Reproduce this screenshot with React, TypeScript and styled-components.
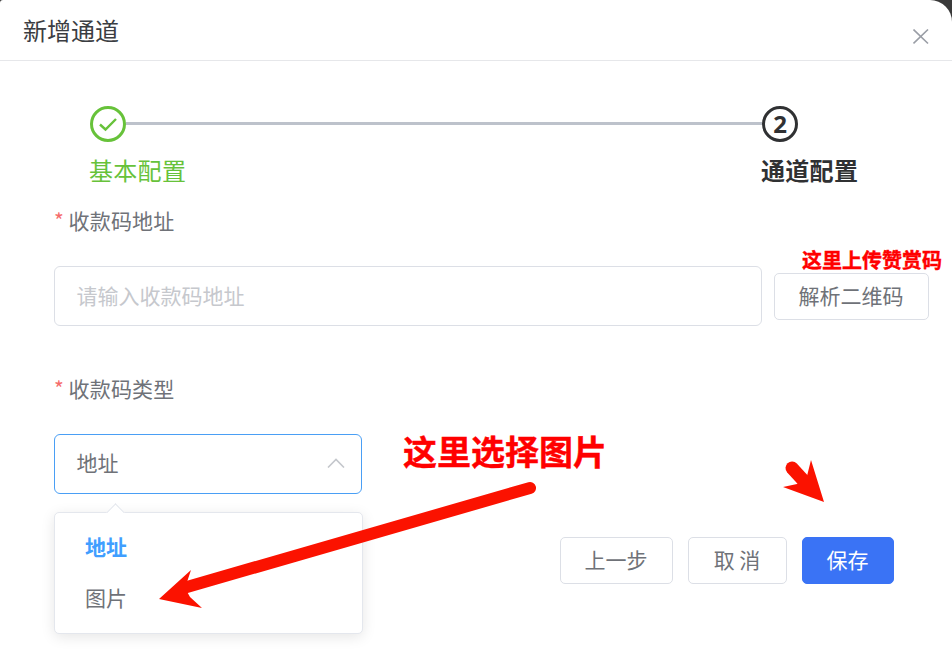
import React from "react";
import styled, { createGlobalStyle } from "styled-components";

const Global = createGlobalStyle`
  html, body { margin: 0; padding: 0; background: #fff; }
  body { font-family: "Noto Sans CJK SC", "Noto Sans", sans-serif; }
  * { box-sizing: border-box; }
`;

const Backdrop = styled.div`
  position: relative;
  width: 952px;
  height: 665px;
  overflow: hidden;
  background: #3a3a3a;
`;
const Dialog = styled.div`
  position: relative;
  width: 952px;
  height: 665px;
  background: #fff;
  border-radius: 3px 22px 0 0;
`;
const Header = styled.header`
  height: 61px;
  padding: 12px 0 0 23px;
  display: flex;
  justify-content: space-between;
  border-bottom: 1px solid #e6e7ea;
`;
const Title = styled.h2`
  margin: 0;
  font-size: 24px;
  line-height: 36px;
  font-weight: 400;
  color: #3b3d42;
`;
const Close = styled.button`
  width: 16px;
  height: 16px;
  margin: 17px 23px 0 0;
  padding: 0;
  border: 0;
  background: none;
  color: #9a9ea6;
  display: flex;
`;
const Steps = styled.div`
  display: flex;
  padding: 45px 0 0 90px;
  width: 858px;
`;
const Step = styled.div<{ $grow?: boolean }>`
  flex: ${(p) => (p.$grow ? "1" : "none")};
  display: flex;
  flex-direction: column;
  width: 96px;
`;
const StepTop = styled.div`
  display: flex;
  align-items: center;
  height: 36px;
`;
const Circle = styled.div<{ $color: string }>`
  width: 36px;
  height: 36px;
  flex: none;
  border-radius: 50%;
  border: 3px solid ${(p) => p.$color};
  color: ${(p) => p.$color};
  display: flex;
  align-items: center;
  justify-content: center;
  font: 700 24px/1 "Noto Sans", sans-serif;
`;
const Line = styled.div`
  flex: 1;
  height: 3px;
  margin-bottom: 1px;
  background: #bdc2cb;
`;
const StepLabel = styled.div<{ $color: string; $bold?: boolean }>`
  margin: 10px 0 0 -1px;
  font-size: 24px;
  line-height: 36px;
  letter-spacing: 0.3px;
  white-space: nowrap;
  color: ${(p) => p.$color};
  font-weight: ${(p) => (p.$bold ? 700 : 400)};
`;
const Label = styled.label`
  display: block;
  height: 32px;
  font-size: 21px;
  line-height: 32px;
  letter-spacing: 0.2px;
  color: #6f7278;
  white-space: nowrap;
`;
const Star = styled.span`
  display: inline-block;
  width: 14.5px;
  color: #f56c6c;
  font-size: 21px;
`;
const Form = styled.div`
  padding: 16px 0 0 54px;
`;
const Field = styled.div`
  margin-top: 30px;
  height: 60px;
  display: flex;
  align-items: center;
`;
const Input = styled.div`
  width: 708px;
  height: 60px;
  padding-left: 21.5px;
  border: 1px solid #dcdfe6;
  border-radius: 6px;
  font-size: 21px;
  line-height: 56px;
  color: #c6c8cd;
`;
const Button = styled.button<{ $w: number; $primary?: boolean }>`
  width: ${(p) => p.$w}px;
  height: 47px;
  padding: 0 1px 2px 0;
  border-radius: 5px;
  border: 1px solid ${(p) => (p.$primary ? "#3a73f5" : "#dcdfe6")};
  background: ${(p) => (p.$primary ? "#3a73f5" : "#fff")};
  color: ${(p) => (p.$primary ? "#fff" : "#6f7278")};
  font-family: inherit;
  font-size: 21px;
  line-height: 1;
  white-space: pre;
`;
const ParseButton = styled(Button)`
  margin-left: 12px;
`;
const SecondItem = styled.div`
  margin-top: 46px;
`;
const Select = styled.div`
  width: 308px;
  height: 60px;
  padding: 0 16px 5px 21.5px;
  border: 1px solid #4a9ff5;
  border-radius: 6px;
  display: flex;
  align-items: center;
  justify-content: space-between;
  font-size: 21px;
  color: #6f7278;
`;
const Chevron = styled.svg`
  width: 18px;
  height: 10px;
  color: #c4c7cc;
  margin-top: 3px;
`;
const Menu = styled.div`
  position: absolute;
  left: 54px;
  top: 512px;
  width: 309px;
  height: 122px;
  padding: 11px 0 0 30px;
  background: #fff;
  border: 1px solid #e4e7ed;
  border-radius: 5px;
  box-shadow: 0 3px 14px rgba(0, 0, 0, 0.1);
  &::before {
    content: "";
    position: absolute;
    left: 54px;
    top: -7px;
    width: 12px;
    height: 12px;
    background: #fff;
    border-left: 1px solid #e4e7ed;
    border-top: 1px solid #e4e7ed;
    transform: rotate(45deg);
  }
`;
const MenuItem = styled.div<{ $active?: boolean }>`
  height: 51px;
  line-height: 44px;
  font-size: 21px;
  color: ${(p) => (p.$active ? "#409eff" : "#6f7278")};
  font-weight: ${(p) => (p.$active ? 700 : 400)};
`;
const Footer = styled.div`
  position: absolute;
  right: 58px;
  top: 537px;
  display: flex;
  gap: 15px;
`;
const Note = styled.div<{ $size: number; $left: number; $top: number }>`
  position: absolute;
  left: ${(p) => p.$left}px;
  top: ${(p) => p.$top}px;
  font-size: ${(p) => p.$size}px;
  line-height: 1.2;
  font-weight: 700;
  color: #ff0000;
  -webkit-text-stroke: 0.4px #ff0000;
  white-space: nowrap;
`;
const Overlay = styled.svg`
  position: absolute;
  inset: 0;
  pointer-events: none;
`;

export default function App() {
  return (
    <Backdrop>
      <Global />
      <Dialog>
        <Header>
          <Title>新增通道</Title>
          <Close aria-label="关闭">
            <svg width="16" height="16" viewBox="0 0 16 16" fill="none" stroke="currentColor" strokeWidth="1.6">
              <path d="M0.5 0.5 L15 14.5 M15 0.5 L0.5 14.5" />
            </svg>
          </Close>
        </Header>
        <Steps>
          <Step $grow>
            <StepTop>
              <Circle $color="#67c23a">
                <svg width="20" height="16" viewBox="0 0 20 16" fill="none" stroke="currentColor" strokeWidth="2.4">
                  <path d="M2 8.5 L7.5 13.5 L18 3" />
                </svg>
              </Circle>
              <Line />
            </StepTop>
            <StepLabel $color="#67c23a">基本配置</StepLabel>
          </Step>
          <Step>
            <StepTop>
              <Circle $color="#303133">2</Circle>
            </StepTop>
            <StepLabel $color="#303133" $bold>
              通道配置
            </StepLabel>
          </Step>
        </Steps>
        <Form>
          <Label>
            <Star>*</Star>收款码地址
          </Label>
          <Field>
            <Input>请输入收款码地址</Input>
            <ParseButton $w={155}>解析二维码</ParseButton>
          </Field>
          <SecondItem>
            <Label>
              <Star>*</Star>收款码类型
            </Label>
            <Field>
              <Select>
                地址
                <Chevron viewBox="0 0 18 10" fill="none" stroke="currentColor" strokeWidth="1.6">
                  <path d="M1 9.5 L9 1.5 L17 9.5" />
                </Chevron>
              </Select>
            </Field>
          </SecondItem>
        </Form>
        <Menu>
          <MenuItem $active>地址</MenuItem>
          <MenuItem>图片</MenuItem>
        </Menu>
        <Footer>
          <Button $w={113}>上一步</Button>
          <Button $w={99}>取 消</Button>
          <Button $w={92} $primary>
            保存
          </Button>
        </Footer>
        <Note $size={20} $left={802} $top={248}>
          这里上传赞赏码
        </Note>
        <Note $size={34} $left={403} $top={431}>
          这里选择图片
        </Note>
        <Overlay width="952" height="665" viewBox="0 0 952 665">
          <path d="M530 488 L187 587" stroke="#fb1200" strokeWidth="12" strokeLinecap="round" fill="none" />
          <path d="M159 599 L191 570 L185 588 L190 597 L202 608 Z" fill="#fb1200" />
          <path d="M792 468 L803 480" stroke="#fb1200" strokeWidth="13" strokeLinecap="round" fill="none" />
          <path d="M824 502 L811 460 L807 476 L797 484 L783 487 Z" fill="#fb1200" />
        </Overlay>
      </Dialog>
    </Backdrop>
  );
}
